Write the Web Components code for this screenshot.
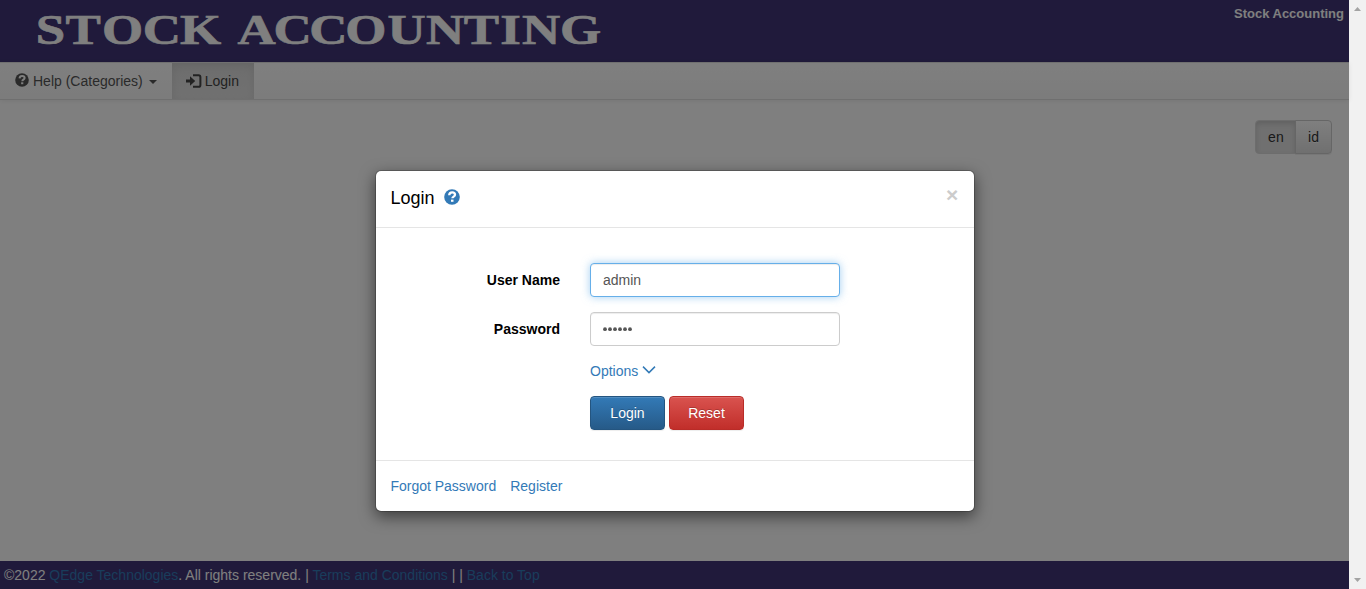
<!DOCTYPE html>
<html lang="en"><head><meta charset="utf-8"><title>Stock Accounting</title>
<style>
html,body{margin:0;height:100%;overflow:hidden}
body{font:14px/20px "Liberation Sans",Arial,sans-serif;color:#000;background:#fff}
</style></head><body>
<stock-app></stock-app>
<script>
const define=(name,html)=>customElements.define(name,class extends HTMLElement{
  constructor(){super();this.attachShadow({mode:'open'}).innerHTML=html;}
});
define('icon-help',`<style>:host{display:inline-block;width:1em;height:1em}svg{display:block;width:100%;height:100%}</style>
<svg viewBox="0 0 16 16"><circle cx="8" cy="8" r="7.8" fill="currentColor"/><path d="M5.2 6.2C5.3 4.3 6.4 3.4 8.2 3.4C9.9 3.4 11 4.4 11 5.8C11 7.7 8.4 7.6 8.4 9.3" fill="none" stroke="var(--mark,#fff)" stroke-width="2.3"/><path d="M7 10.6h2.5v2.2H7z" fill="var(--mark,#fff)"/></svg>`);
define('icon-login',`<style>:host{display:inline-block;width:16px;height:14px}svg{display:block}</style>
<svg width="16" height="14" viewBox="0 0 16 14"><path d="M0 5.4h4V2.3L9.2 7 4 11.7V8.6H0z" fill="currentColor"/><path d="M7 1.2h5.5q1.9 0 1.9 1.9v7.8q0 1.9-1.9 1.9H7" fill="none" stroke="currentColor" stroke-width="2"/></svg>`);
define('app-logo',`<style>:host{display:block}svg{display:block}text{font:bold 42px "Liberation Serif",serif;fill:#fff;stroke:#fff;stroke-width:.6px}</style>
<svg width="620" height="62"><g transform="scale(1.26 1)"><text y="44" x="28.3 52 81 113.3 142.8 170 188.5 217 245.5 274 307.5 338.2 368 397 414.3 444.5">STOCK ACCOUNTING</text></g></svg>`);
define('app-header',`<style>:host{display:flex;justify-content:space-between;height:62px;background:#403576;color:#fff;font-weight:bold;font-size:13px}span{padding:4px 5px 0 0}</style><app-logo></app-logo><span><slot></slot></span>`);
define('nav-item',`<style>:host{display:flex;align-items:center;box-sizing:border-box;height:36px;padding:0 15px;color:#555;white-space:nowrap}
:host([active]){padding:0 15px 0 14px;background:linear-gradient(#dbdbdb,#e2e2e2);box-shadow:inset 0 3px 9px rgba(0,0,0,.075);color:#444}</style><slot></slot>`);
define('nav-bar',`<style>:host{display:flex;height:36px;border-top:1px solid #e0e0e0;border-bottom:1px solid #dedede;background:linear-gradient(#fff,#f8f8f8);box-shadow:0 1px 5px rgba(0,0,0,.075)}</style><slot></slot>`);
define('language-switch',`<style>:host{display:flex;justify-content:flex-end;padding:20px 17px 0 0}
span{box-sizing:border-box;height:34px;border:1px solid #ccc;padding:6px 12px;color:#333;background:linear-gradient(#fff,#e0e0e0);border-radius:0 4px 4px 0;text-shadow:0 1px 0 #fff;box-shadow:inset 0 1px 0 rgba(255,255,255,.15),0 1px 1px rgba(0,0,0,.075);margin-left:-1px}
.on{background:#e0e0e0;border-color:#dbdbdb;border-radius:4px 0 0 4px;box-shadow:inset 0 3px 5px rgba(0,0,0,.125);width:41px;text-shadow:none}</style><span class="on">en</span><span>id</span>`);
define('app-footer',`<style>:host{display:block;box-sizing:border-box;height:28px;padding:4px;background:#403576;color:#fff}a{color:#337ab7}</style>©2022 <a>QEdge Technologies</a>. All rights reserved. | <a>Terms and Conditions</a> | | <a>Back to Top</a>`);
define('scroll-bar',`<style>:host{display:flex;flex-direction:column;justify-content:space-between;align-items:center;background:#f1f1f1;width:17px;height:100%;box-sizing:border-box;padding:7px 0}svg{display:block}</style>
<svg width="7" height="4"><path d="M0 4L3.5 0L7 4z" fill="#a3a3a3"/></svg><svg width="7" height="4"><path d="M0 0L3.5 4L7 0z" fill="#a3a3a3"/></svg>`);
define('form-row',`<style>:host{display:grid;grid-template-columns:184px 250px;column-gap:30px;margin-bottom:15px;align-items:center}label{font-weight:bold;text-align:right}
.c{box-sizing:border-box;height:34px;padding:6px 12px;border:1px solid #ccc;border-radius:4px;color:#555;background:#fff;box-shadow:inset 0 1px 1px rgba(0,0,0,.075)}
:host([focused]) .c{border-color:#66afe9;box-shadow:inset 0 1px 1px rgba(0,0,0,.075),0 0 8px rgba(102,175,233,.6)}</style><label><slot name="label"></slot></label><div class="c"><slot></slot></div>`);
define('action-button',`<style>:host{display:block;box-sizing:border-box;width:75px;height:34px;padding:6px 0;text-align:center;border:1px solid #245580;border-radius:4px;color:#fff;background:linear-gradient(#337ab7,#265a88);text-shadow:0 -1px 0 rgba(0,0,0,.2);box-shadow:inset 0 1px 0 rgba(255,255,255,.15),0 1px 1px rgba(0,0,0,.075)}
:host([danger]){border-color:#b92c28;background:linear-gradient(#d9534f,#c12e2a)}</style><slot></slot>`);
define('login-dialog',`<style>:host{display:block;box-sizing:border-box;width:600px;height:342px;background:#fff;background-clip:padding-box;border:1px solid rgba(0,0,0,.2);border-radius:6px;box-shadow:0 5px 15px rgba(0,0,0,.5)}
header{display:flex;box-sizing:border-box;height:57px;padding:14px 15px 14px 14.4px;border-bottom:1px solid #e5e5e5;font-size:18px;line-height:26px}
header icon-help{width:16px;height:16px;color:#337ab7;margin:4px 0 0 10px}
.x{margin:-1px 0 0 auto;font-weight:bold;font-size:21px;line-height:21px;color:#ccc;width:13px}
main{box-sizing:border-box;height:232px;padding-top:35px}
.in{margin-left:214px}.o{display:flex;height:20px;color:#337ab7}.o svg{margin:4px 0 0 4px}
.b{display:flex;gap:4px;margin-top:15px}
footer{display:flex;gap:14px;border-top:1px solid #e5e5e5;padding:15px 14.4px;color:#337ab7}
.d{display:flex;padding:8px 0}.d svg{display:block}</style>
<header><span>Login</span><icon-help></icon-help><span class="x">×</span></header>
<main><form-row focused><span slot="label">User Name</span>admin</form-row>
<form-row><span slot="label">Password</span><span class="d"><svg width="30" height="5" fill="#555"><circle cx="2" cy="2.2" r="1.9"/><circle cx="7" cy="2.2" r="1.9"/><circle cx="12" cy="2.2" r="1.9"/><circle cx="17" cy="2.2" r="1.9"/><circle cx="22" cy="2.2" r="1.9"/><circle cx="27" cy="2.2" r="1.9"/></svg></span></form-row>
<div class="in"><div class="o">Options<svg width="14" height="10"><path d="M1 1.6L7 7.6L13 1.6" fill="none" stroke="currentColor" stroke-width="1.5"/></svg></div>
<div class="b"><action-button>Login</action-button><action-button danger>Reset</action-button></div></div></main>
<footer><a>Forgot Password</a><a>Register</a></footer>`);
define('stock-app',`<style>:host{display:grid;grid-template-columns:1fr 17px;height:100vh}
.page{position:relative;display:flex;flex-direction:column;min-width:0}app-footer{margin-top:auto}
.backdrop{position:absolute;inset:0;background:rgba(0,0,0,.5);display:flex;justify-content:center;align-items:flex-start;padding:170px 0 0 1px}
nav-item icon-help{width:14px;height:14px;margin-right:4px;margin-top:-2px}nav-item icon-login{margin-right:3px;margin-top:-1px}
.caret{border:4px solid transparent;border-top-color:currentColor;border-bottom:0;margin:2px 0 0 6px}</style>
<div class="page"><app-header>Stock Accounting</app-header>
<nav-bar><nav-item><icon-help></icon-help>Help (Categories)<i class="caret"></i></nav-item><nav-item active><icon-login></icon-login>Login</nav-item></nav-bar>
<language-switch></language-switch><app-footer></app-footer><div class="backdrop"><login-dialog></login-dialog></div></div><scroll-bar></scroll-bar>`);
</script></body></html>
